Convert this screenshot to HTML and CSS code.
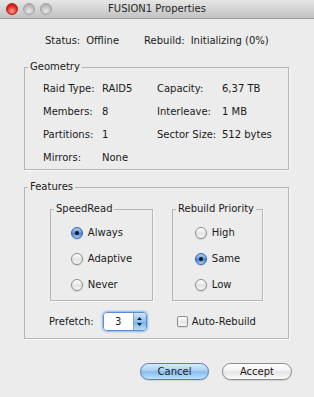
FILE: index.html
```html
<!DOCTYPE html>
<html lang="en">

<head>
    <meta charset="UTF-8">
    <meta name="viewport" content="width=device-width, initial-scale=1.0">
    <title>FUSION1 Properties</title>
    <link rel="stylesheet" href="styles.css">
</head>

<body>
    <div class="window">
        <div class="titlebar">
            <div class="lights">
                <span class="light close"></span>
                <span class="light"></span>
                <span class="light"></span>
            </div>
            <div class="title">FUSION1 Properties</div>
            <div></div>
        </div>

        <div class="status">
            <span class="key">Status:</span><span class="val">Offline</span>
            <span class="key rebuild">Rebuild:</span><span class="val">Initializing (0%)</span>
        </div>

        <fieldset class="group geometry">
            <legend>Geometry</legend>
            <div class="geo-grid">
                <span>Raid Type:</span><span>RAID5</span><span>Capacity:</span><span>6,37 TB</span>
                <span>Members:</span><span>8</span><span>Interleave:</span><span>1 MB</span>
                <span>Partitions:</span><span>1</span><span>Sector Size:</span><span>512 bytes</span>
                <span>Mirrors:</span><span>None</span>
            </div>
        </fieldset>

        <fieldset class="group features">
            <legend>Features</legend>
            <div class="groups">
                <fieldset class="group sub speed">
                    <legend>SpeedRead</legend>
                    <div class="radios">
                        <div class="radio-row"><span class="radio on"></span>Always</div>
                        <div class="radio-row"><span class="radio"></span>Adaptive</div>
                        <div class="radio-row"><span class="radio"></span>Never</div>
                    </div>
                </fieldset>
                <fieldset class="group sub priority">
                    <legend>Rebuild Priority</legend>
                    <div class="radios">
                        <div class="radio-row"><span class="radio"></span>High</div>
                        <div class="radio-row"><span class="radio on"></span>Same</div>
                        <div class="radio-row"><span class="radio"></span>Low</div>
                    </div>
                </fieldset>
            </div>
            <div class="prefetch-row">
                <span>Prefetch:</span>
                <div class="stepper">
                    <span class="stepper-value">3</span>
                    <span class="stepper-arrows">
                        <svg width="7" height="11" viewBox="0 0 7 11">
                            <path d="M3.5 1 L6 4 L1 4 Z" fill="#1c1c1c"/>
                            <path d="M3.5 10 L6 7 L1 7 Z" fill="#1c1c1c"/>
                        </svg>
                    </span>
                </div>
                <span class="checkbox"></span>
                <span class="check-label">Auto-Rebuild</span>
            </div>
        </fieldset>

        <div class="buttons">
            <span class="btn default">Cancel</span>
            <span class="btn">Accept</span>
        </div>
    </div>
</body>

</html>
```

FILE: styles.css
```css
* {
    margin: 0;
    padding: 0;
    box-sizing: border-box;
}

body {
    background: #ececec;
    font-family: "DejaVu Sans", sans-serif;
    font-size: 10px;
    line-height: 14px;
    color: #1a1a1a;
}

.window {
    width: 314px;
    height: 397px;
    background: #ececec;
}

/* title bar */
.titlebar {
    height: 19px;
    display: grid;
    grid-template-columns: 1fr auto 1fr;
    align-items: center;
    background: linear-gradient(#e6e6e6, #c2c2c2);
    border-bottom: 1px solid #9c9c9c;
}

.lights {
    display: flex;
    gap: 5px;
    padding-left: 6px;
}

.light {
    width: 12px;
    height: 12px;
    border-radius: 50%;
    background: radial-gradient(circle at 50% 70%, #e8e8e8, #b4b4b4 70%);
    border: 1px solid #a2a2a2;
}

.light.close {
    background: radial-gradient(circle at 50% 70%, #ff9a93, #e0251c 60%, #b81410);
    border-color: #a8231d;
}

.title {
    color: #262626;
}

/* status line */
.status {
    margin: 15px 0 0 45px;
    display: flex;
}

.status .key {
    margin-right: 6px;
}

.status .rebuild {
    margin-left: 25px;
}

/* group boxes */
.group {
    border: 1px solid #b6b6b6;
    box-shadow: 1px 1px 0 #f9f9f9;
    padding: 0;
    min-width: 0;
}

.group legend {
    margin-left: 3px;
    padding: 0 2px;
}

.geometry {
    margin: 12px 25px 0 24px;
}

.geo-grid {
    display: grid;
    grid-template-columns: 59px 55px 65px auto;
    grid-auto-rows: 23px;
    align-items: center;
    padding: 3px 0 0 18px;
}

.features {
    margin: 10px 25px 0 24px;
    padding-top: 8px;
    padding-bottom: 7px;
}

.groups {
    display: flex;
    justify-content: center;
    gap: 19px;
}

.speed {
    width: 103px;
}

.priority {
    width: 91px;
}

.radios {
    width: fit-content;
    margin: 0 auto;
    padding: 4px 0 2px;
}

.radio-row {
    height: 26px;
    display: flex;
    align-items: center;
    gap: 5px;
}

.radio {
    width: 12px;
    height: 12px;
    border-radius: 50%;
    border: 1px solid #8c8c8c;
    background: linear-gradient(#ffffff, #e4e4e4 55%, #f6f6f6);
    box-shadow: 0 1px 1px rgba(0, 0, 0, 0.12);
    display: flex;
    align-items: center;
    justify-content: center;
}

.radio.on {
    border-color: #3d5f93;
    background: linear-gradient(#a9cdf2, #5d9ae0 50%, #3d82d9 55%, #a6d4fa);
}

.radio.on::after {
    content: "";
    width: 4px;
    height: 4px;
    border-radius: 50%;
    background: #111;
}

/* prefetch row */
.prefetch-row {
    margin-top: 11px;
    height: 19px;
    display: flex;
    align-items: center;
    padding-left: 24px;
}

.stepper {
    margin-left: 9px;
    width: 44px;
    height: 19px;
    display: flex;
    border: 1px solid #5d8ccc;
    border-radius: 4px;
    box-shadow: 0 0 2px 1px #86b5ee;
    overflow: hidden;
}

.stepper-value {
    flex: 1;
    background: #fff;
    text-align: center;
    line-height: 17px;
}

.stepper-arrows {
    width: 13px;
    display: flex;
    align-items: center;
    justify-content: center;
    border-left: 1px solid #7ea4d4;
    background: linear-gradient(#cfe5fa, #8fc1ef 50%, #7ab5ec 55%, #b9ddfb);
}

.checkbox {
    margin-left: 30px;
    width: 11px;
    height: 11px;
    border: 1px solid #8e8e8e;
    border-radius: 2px;
    background: linear-gradient(#ffffff, #e6e6e6 55%, #f7f7f7);
    box-shadow: 0 1px 1px rgba(0, 0, 0, 0.1);
}

.check-label {
    margin-left: 4px;
}

/* buttons */
.buttons {
    margin-top: 24px;
    display: flex;
    justify-content: flex-end;
    gap: 13px;
    padding-right: 22px;
}

.btn {
    width: 70px;
    height: 17px;
    border-radius: 9px;
    border: 1px solid #8a8a8a;
    background: linear-gradient(#ffffff, #f2f2f2 45%, #e4e4e4 52%, #fbfbfb);
    text-align: center;
    line-height: 15px;
    box-shadow: 0 1px 1px rgba(0, 0, 0, 0.12);
}

.btn.default {
    width: 69px;
    border-color: #5a7eb3;
    background: linear-gradient(#d6eafc, #a8cff4 45%, #85bdf0 52%, #bfe1fc);
}
```
